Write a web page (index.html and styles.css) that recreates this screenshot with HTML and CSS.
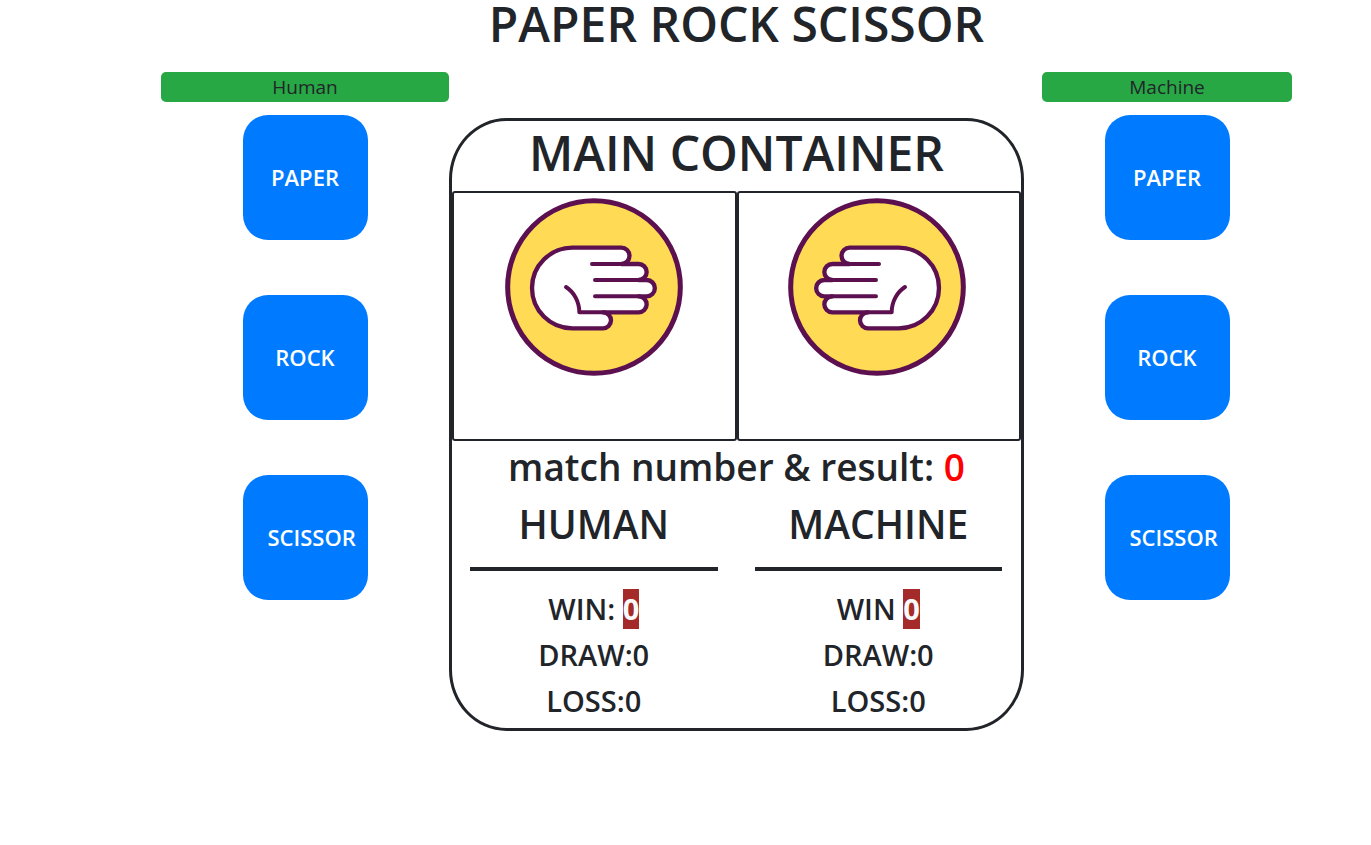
FILE: index.html
```html
<!DOCTYPE html>
<html lang="en">
<head>
<meta charset="utf-8">
<meta name="viewport" content="width=device-width, initial-scale=1">
<title>Paper Rock Scissor</title>
<link rel="stylesheet" href="styles.css">
</head>
<body>
<svg class="defs" aria-hidden="true">
  <symbol id="hand" viewBox="31 24 534 534">
    <circle cx="298" cy="291" r="259" fill="#ffda55" stroke="#5c1050" stroke-width="15"/>
    <g stroke="#5c1050" stroke-width="13" stroke-linecap="round" stroke-linejoin="round">
      <path fill="#fff" d="M233 173H380A24.500 24.500 0 0 1 380 222H432A24 24 0 0 1 432 270H456A24.500 24.500 0 0 1 456 319H432A24 24 0 0 1 432 367H325A24 24 0 0 1 325 415H233A121 121 0 0 1 233 173Z"/>
      <path fill="none" stroke-width="12" d="M292 222H385M301 270H435M301 319H435M214 291C238 306 254 336 254 367H330"/>
    </g>
  </symbol>
</svg>
<main class="game">
  <h1 class="title">PAPER ROCK SCISSOR</h1>
  <section class="player human">
    <p class="name">Human</p>
    <button class="choice" type="button">PAPER</button>
    <button class="choice" type="button">ROCK</button>
    <button class="choice" type="button">SCISSOR</button>
  </section>
  <section class="board">
    <h2 class="board-title">MAIN CONTAINER</h2>
    <div class="panes">
      <div class="pane"><svg class="hand" role="img" aria-label="Human hand"><use href="#hand"/></svg></div>
      <div class="pane"><svg class="hand mirrored" role="img" aria-label="Machine hand"><use href="#hand"/></svg></div>
    </div>
    <h3 class="result">match number &amp; result: <span class="count">0</span></h3>
    <div class="scores">
      <div class="score">
        <h3 class="score-title">HUMAN</h3>
        <hr class="rule">
        <p class="line">WIN: <span class="win">0</span></p>
        <p class="line">DRAW:0</p>
        <p class="line">LOSS:0</p>
      </div>
      <div class="score">
        <h3 class="score-title">MACHINE</h3>
        <hr class="rule">
        <p class="line">WIN <span class="win">0</span></p>
        <p class="line">DRAW:0</p>
        <p class="line">LOSS:0</p>
      </div>
    </div>
  </section>
  <section class="player machine">
    <p class="name">Machine</p>
    <button class="choice" type="button">PAPER</button>
    <button class="choice" type="button">ROCK</button>
    <button class="choice" type="button">SCISSOR</button>
  </section>
</main>
</body>
</html>
```
FILE: styles.css
```css
* { box-sizing: border-box; }
body {
  margin: 0;
  background: #fff;
  color: #212529;
  font-family: "Segoe UI", "Open Sans", "Noto Sans", sans-serif;
}
h1, h2, h3, p { margin: 0; font-weight: 600; }
.defs { position: absolute; width: 0; height: 0; }
.game {
  display: grid;
  grid-template-columns: 288fr 575fr 268fr;
  grid-template-rows: 72px auto;
  padding: 0 79px 0 161px;
  text-align: center;
}
.title {
  grid-column: 2;
  font-size: 48px;
  line-height: 48px;
  white-space: nowrap;
}
.player {
  grid-row: 2;
  display: flex;
  flex-direction: column;
  align-items: center;
  gap: 55px;
}
.machine { grid-column: 3; margin-left: 18px; }
.name {
  width: 100%;
  margin-bottom: -42px;
  border-radius: 5px;
  background: #28a745;
  font-size: 19px;
  font-weight: 400;
  line-height: 30px;
}
.choice {
  width: 125px;
  height: 125px;
  padding: 24px 25px 26px;
  border: 0;
  border-radius: 25px;
  background: #007bff;
  color: #fff;
  font: 600 22px/30px "Segoe UI", "Open Sans", "Noto Sans", sans-serif;
}
.board {
  grid-column: 2;
  grid-row: 2;
  margin-top: 46px;
  border: 3px solid #212529;
  border-radius: 10%;
}
.board-title {
  font-size: 48px;
  line-height: 64px;
  padding-bottom: 6px;
}
.panes, .scores { display: grid; grid-template-columns: 1fr 1fr; }
.pane {
  height: 250px;
  padding-top: 5px;
  border: 2px solid #212529;
  border-radius: 3px;
}
.pane + .pane { padding-right: 3px; }
.hand { display: block; width: 178px; height: 178px; margin: 0 auto; }
.mirrored { transform: scaleX(-1); }
.result { font-size: 37px; line-height: 48px; padding: 2px 0 8px; }
.count { color: #f00; }
.score { padding: 0 19px 7px 18px; }
.score-title { font-size: 39px; line-height: 50px; }
.rule { height: 4px; margin: 18px 0; border: 0; background: #212529; }
.line { font-size: 29px; line-height: 40px; }
.line + .line { margin-top: 6px; }
.win { display: inline-block; background: brown; color: #f8f9fa; font-weight: 700; }
```
